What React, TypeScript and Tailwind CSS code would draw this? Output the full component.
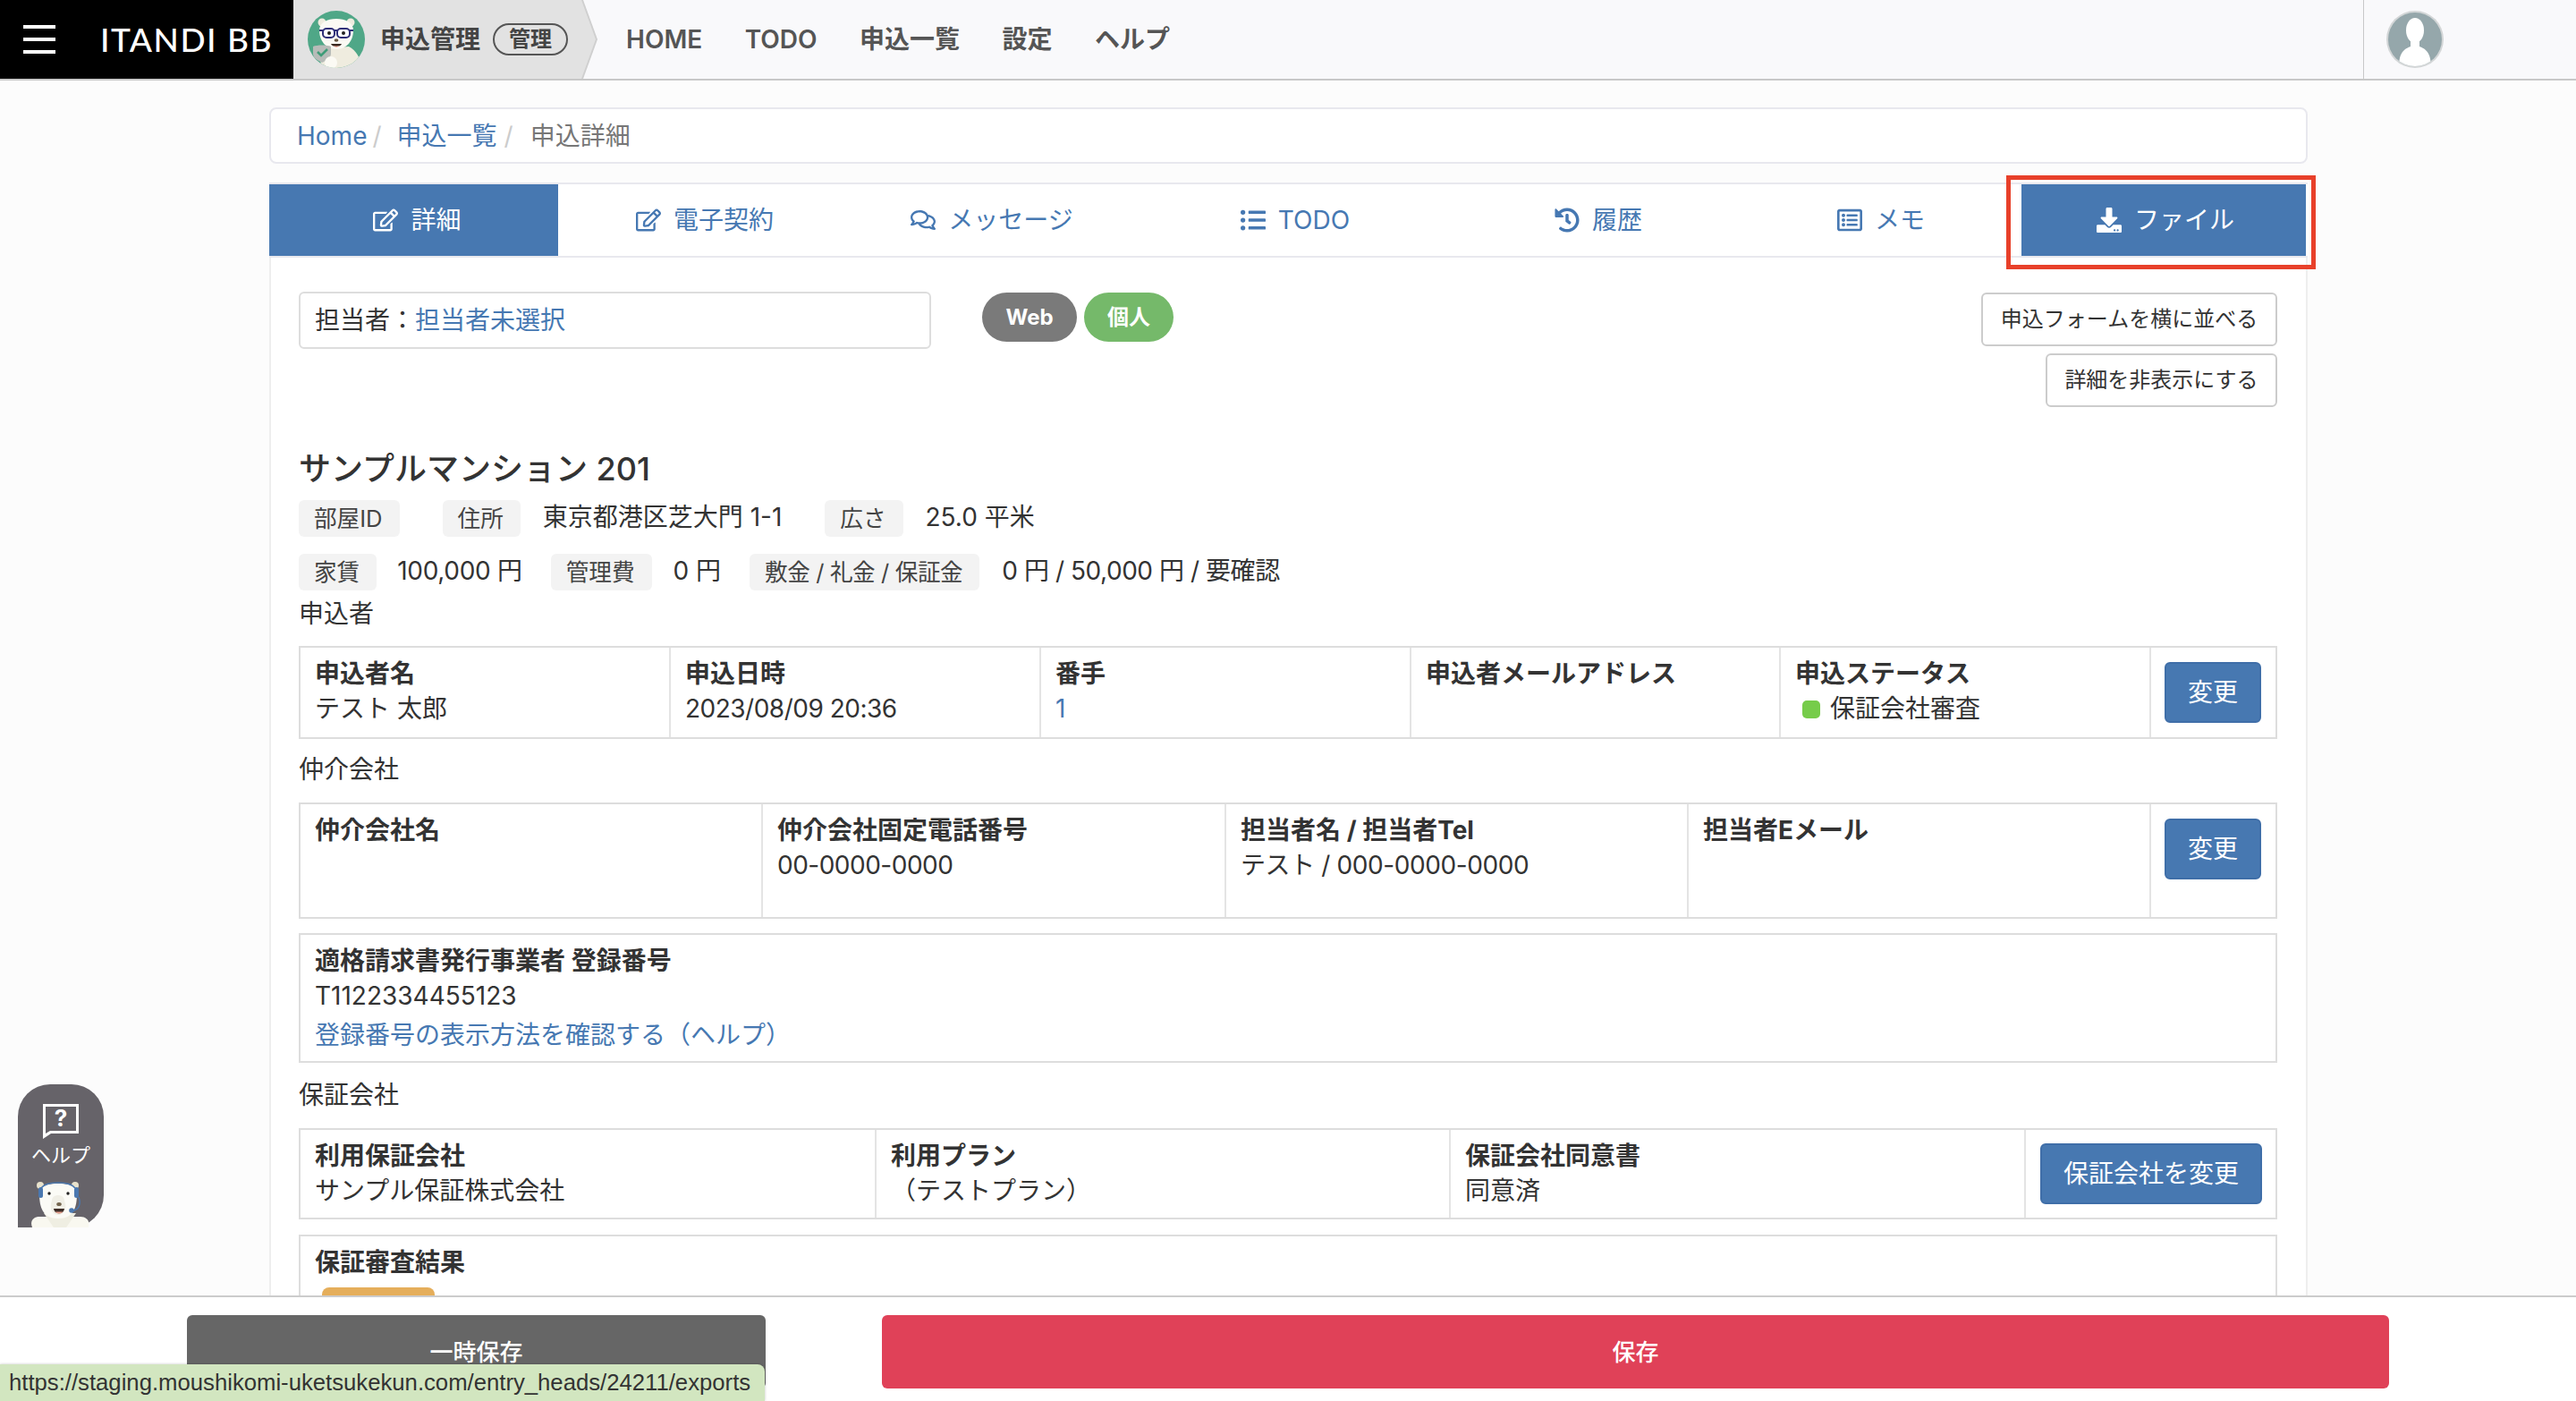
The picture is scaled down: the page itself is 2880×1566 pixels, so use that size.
import { FaDownload, FaHistory, FaListUl, FaRegComments, FaRegEdit, FaRegListAlt } from "react-icons/fa";

const navItems = ["HOME", "TODO", "申込一覧", "設定", "ヘルプ"];

const tabs = [
  { label: "詳細", icon: FaRegEdit, active: true, pad: "pl-[8px]" },
  { label: "電子契約", icon: FaRegEdit, pad: "pl-[2px]" },
  { label: "メッセージ", icon: FaRegComments, pad: "pl-[2px]" },
  { label: "TODO", icon: FaListUl, pad: "pl-[2px]" },
  { label: "履歴", icon: FaHistory, pad: "pl-[2px]" },
  { label: "メモ", icon: FaRegListAlt, pad: "pl-[2px]" },
  { label: "ファイル", icon: FaDownload, active: true, pad: "pl-[4px]" },
];

const Tag = ({ children, className = "" }: { children: React.ReactNode; className?: string }) => (
  <span className={`flex h-[41px] items-center rounded-md bg-[#f3f3f3] pr-[19px] pl-[17px] text-[25.6px] text-[#444] ${className}`}>{children}</span>
);

const Cell = ({ title, children, last }: { title: string; children?: React.ReactNode; last?: boolean }) => (
  <div className={`pl-[16px] pt-[10px] text-[28px] leading-[39px] ${last ? "" : "border-r-2 border-[#e4e4e4]"}`}>
    <div className="font-bold text-[#333]">{title}</div>
    <div className="text-[#333]">{children}</div>
  </div>
);

const ActionButton = ({ children, width }: { children: React.ReactNode; width: string }) => (
  <button className={`h-[68px] ${width} rounded-md border-2 border-[#3f6ea8] bg-[#4778b1] text-[28px] text-white`}>{children}</button>
);

const SectionLabel = ({ children, className }: { children: React.ReactNode; className: string }) => (
  <div className={`text-[28px] leading-[39px] text-[#333] ${className}`}>{children}</div>
);

const HeaderBear = () => (
  <svg viewBox="0 0 64 64" className="h-[64px] w-[64px] shrink-0">
    <defs>
      <clipPath id="bearClip">
        <circle cx="32" cy="32" r="32" />
      </clipPath>
    </defs>
    <g clipPath="url(#bearClip)">
      <rect width="64" height="64" fill="#4fa787" />
      <path d="M20 42 C14 50 14 64 14 64 H60 C60 54 54 44 46 40Z" fill="#efecdf" />
      <circle cx="16" cy="13" r="4.5" fill="#efecdf" />
      <circle cx="48" cy="13" r="4.5" fill="#efecdf" />
      <path d="M13 22 C13 13 22 9 32 9 C42 9 51 13 51 22 C51 33 44 43 32 43 C20 43 13 33 13 22Z" fill="#fbfaf4" />
      <rect x="17" y="20" width="13" height="10" rx="4" fill="#fff" stroke="#2f2f78" strokeWidth="2" />
      <rect x="33" y="20" width="14" height="10" rx="4" fill="#fff" stroke="#2f2f78" strokeWidth="2" />
      <path d="M13 22H17M30 22H33M47 22H51" stroke="#2f2f78" strokeWidth="2" />
      <circle cx="24" cy="25" r="2" fill="#222" />
      <circle cx="40" cy="25" r="2" fill="#222" />
      <ellipse cx="32" cy="33" rx="2.4" ry="1.8" fill="#6b5a45" />
      <path d="M26 37 H38 C37 41 27 41 26 37Z" fill="#3a2a22" />
      <path d="M29 39.5 H35 C34 41 30 41 29 39.5Z" fill="#ee9c8c" />
      <path d="M6 40 C10 38 22 38 26 40 V48 C26 53 20 56 16 58 C12 56 6 53 6 48Z" fill="#b7bbb8" />
      <path d="M11 46 L15 50 L22 43" fill="none" stroke="#3f9c78" strokeWidth="2.6" />
      <circle cx="26" cy="58" r="7" fill="#fbfaf4" />
    </g>
  </svg>
);

const UserAvatar = () => (
  <svg viewBox="0 0 64 64" className="h-[64px] w-[64px]">
    <defs>
      <clipPath id="userClip">
        <circle cx="32" cy="32" r="30" />
      </clipPath>
    </defs>
    <circle cx="32" cy="32" r="32" fill="#d3d6d7" />
    <g clipPath="url(#userClip)">
      <rect width="64" height="64" fill="#95a7ab" />
      <ellipse cx="32" cy="22" rx="10" ry="14" fill="#fff" />
      <path d="M27 33 H37 V40 C44 43 50 46 50 64 H14 C14 46 20 43 27 40Z" fill="#fff" />
    </g>
  </svg>
);

const HelpBear = () => (
  <svg viewBox="0 0 66 52" className="absolute bottom-0 left-[14px] h-[52px] w-[66px]">
    <path d="M2 52 C-1 44 4 40 10 40 L56 40 C62 40 67 44 65 52Z" fill="#f9f8f0" />
    <path d="M15 36 H51 L40 52 H26Z" fill="#efeee2" />
    <circle cx="11" cy="5" r="4" fill="#e8e2cc" />
    <circle cx="50" cy="5" r="4" fill="#e8e2cc" />
    <path d="M10 14 C10 5 20 3 31 3 C42 3 52 5 52 14 C52 30 48 42 31 42 C14 42 10 30 10 14Z" fill="#fbfbf6" />
    <path d="M24 22 C24 14 38 14 38 22 C42 32 36 38 31 38 C26 38 20 32 24 22Z" fill="#f0efe6" />
    <path d="M12 8 C18 0 44 0 50 8" fill="none" stroke="#4a78b0" strokeWidth="1.6" />
    <rect x="9" y="7" width="5" height="12" rx="2.5" fill="#4a78b0" />
    <rect x="49" y="7" width="5" height="12" rx="2.5" fill="#4a78b0" />
    <path d="M54 18 C57 26 54 32 48 33" fill="none" stroke="#4a78b0" strokeWidth="1.4" />
    <circle cx="46" cy="33" r="2.8" fill="#4a78b0" />
    <circle cx="21" cy="14" r="1.7" fill="#222" />
    <circle cx="42" cy="14" r="1.7" fill="#222" />
    <ellipse cx="32" cy="26" rx="2.8" ry="2" fill="#75664f" />
    <path d="M26 31 H38 C37 38 27 38 26 31Z" fill="#3b2b25" />
    <path d="M28 34.5 H36 C35 37 29 37 28 34.5Z" fill="#eda491" />
  </svg>
);

export default function App() {
  return (
    <div className="relative h-[1566px] w-[2880px] overflow-hidden bg-[#fcfcfc] font-['Inter','Noto_Sans_CJK_JP',sans-serif] text-[#333]">
      <header className="flex h-[90px] border-b-2 border-[#c8c8c8] bg-[#f9f9fb]">
        <div className="flex w-[328px] items-center bg-black pl-[26px]">
          <div className="flex h-[32px] w-[36px] flex-col justify-between">
            <span className="h-[4px] bg-white" />
            <span className="h-[4px] bg-white" />
            <span className="h-[4px] bg-white" />
          </div>
          <span className="ml-[50px] whitespace-nowrap font-['Lato',sans-serif] text-[37px] font-medium tracking-[1.5px] text-white">ITANDI BB</span>
        </div>
        <div className="w-[340px] bg-[#cfcfcf] [clip-path:polygon(0_0,324px_0,340px_50%,324px_100%,0_100%)]">
          <div className="flex h-full w-[338px] items-center bg-[#e2e2e2] pl-[16px] [clip-path:polygon(0_0,322px_0,338px_50%,322px_100%,0_100%)]">
            <HeaderBear />
            <span className="ml-[17px] text-[28px] font-bold whitespace-nowrap text-[#444]">申込管理</span>
            <span className="ml-[14px] flex h-[36px] w-[84px] items-center justify-center rounded-full border-2 border-[#555] text-[24px] font-bold text-[#444]">管理</span>
          </div>
        </div>
        <nav className="ml-[32px] flex items-center gap-[47.5px] text-[28px] font-semibold text-[#555]">
          {navItems.map((item) => (
            <span key={item} className="whitespace-nowrap">{item}</span>
          ))}
        </nav>
        <div className="ml-auto flex w-[238px] items-center border-l border-[#c8c8c8] pl-[25px]">
          <UserAvatar />
        </div>
      </header>

      <main className="ml-[301px] w-[2279px]">
        <div className="mt-[30px] flex h-[63px] items-center rounded-lg border-2 border-[#e8e8ee] bg-white pl-[29px] text-[28px]">
          <span className="text-[#4678b2]">Home</span>
          <span className="mr-[17px] ml-[6px] text-[#ccc]">/</span>
          <span className="text-[#4678b2]">申込一覧</span>
          <span className="mr-[19px] ml-[8px] text-[#ccc]">/</span>
          <span className="text-[#777]">申込詳細</span>
        </div>

        <div className="mt-[21px] grid h-[84px] grid-cols-[323px_326px_316px_362px_316px_316px_318px] border-y-2 border-[#e8e8ee] bg-white text-[28px]">
          {tabs.map(({ label, icon: Icon, active, pad }) => (
            <div key={label} className={`flex items-center justify-center gap-[14px] ${pad} ${active ? "bg-[#4778b1] text-white" : "text-[#4678b2]"}`}>
              <Icon className="text-[28px]" />
              <span>{label}</span>
            </div>
          ))}
        </div>

        <section className="h-[1300px] border-x-2 border-[#eeeeee] bg-white pr-[32px] pl-[31px]">
          <div className="flex items-start justify-between pt-[38px]">
            <div className="flex">
              <div className="flex h-[64px] w-[707px] items-center rounded-md border-2 border-[#ddd] pl-[16px] text-[28px]">
                担当者：<span className="text-[#4678b2]">担当者未選択</span>
              </div>
              <div className="ml-[57px] flex h-[55px] gap-[8px] pt-px text-[24px] font-bold text-white">
                <span className="flex h-[55px] w-[106px] items-center justify-center rounded-full bg-[#7a7a7a]">Web</span>
                <span className="flex h-[55px] w-[100px] items-center justify-center rounded-full bg-[#75b96a]">個人</span>
              </div>
            </div>
            <div className="flex flex-col items-end gap-[8px] pt-px text-[24px]">
              <button className="h-[60px] w-[331px] rounded-md border-2 border-[#ccc] bg-white">申込フォームを横に並べる</button>
              <button className="h-[60px] w-[259px] rounded-md border-2 border-[#ccc] bg-white">詳細を非表示にする</button>
            </div>
          </div>

          <h1 className="mt-[44px] text-[36px] leading-[50px] font-medium text-[#333]">サンプルマンション 201</h1>

          <div className="mt-[10px] flex h-[41px] items-center text-[28px] leading-[36px]">
            <Tag>部屋ID</Tag>
            <span className="ml-[48px]"><Tag>住所</Tag></span>
            <span className="ml-[25px] pb-[3px]">東京都港区芝大門 1-1</span>
            <span className="ml-[48px]"><Tag>広さ</Tag></span>
            <span className="ml-[25px] pb-[3px]">25.0 平米</span>
          </div>
          <div className="mt-[19px] flex h-[41px] items-center text-[28px] leading-[36px]">
            <Tag>家賃</Tag>
            <span className="ml-[23px] pb-[3px] tracking-[-0.3px]">100,000 円</span>
            <span className="ml-[32px]"><Tag>管理費</Tag></span>
            <span className="ml-[24px] pb-[3px]">0 円</span>
            <span className="ml-[32px]"><Tag className="tracking-[-0.4px]">敷金 / 礼金 / 保証金</Tag></span>
            <span className="ml-[25px] pb-[3px] tracking-[-0.45px]">0 円 / 50,000 円 / 要確認</span>
          </div>

          <SectionLabel className="mt-[7px]">申込者</SectionLabel>
          <div className="mt-[16px] grid h-[104px] grid-cols-[414px_414px_414px_413px_414px_1fr] border-2 border-[#ddd]">
            <Cell title="申込者名">テスト 太郎</Cell>
            <Cell title="申込日時"><span className="tracking-[-0.5px]">2023/08/09 20:36</span></Cell>
            <Cell title="番手"><span className="text-[#4678b2]">1</span></Cell>
            <Cell title="申込者メールアドレス" />
            <Cell title="申込ステータス">
              <span className="ml-[8px] inline-flex items-center gap-[11px]">
                <span className="h-[20px] w-[20px] rounded-[5px] bg-[#76cc4a]" />
                保証会社審査
              </span>
            </Cell>
            <div className="pt-[16px] pl-[15px]"><ActionButton width="w-[108px]">変更</ActionButton></div>
          </div>

          <SectionLabel className="mt-[15px]">仲介会社</SectionLabel>
          <div className="mt-[17px] grid h-[130px] grid-cols-[517px_518px_517px_517px_1fr] border-2 border-[#ddd]">
            <Cell title="仲介会社名" />
            <Cell title="仲介会社固定電話番号"><span className="tracking-[-0.5px]">00-0000-0000</span></Cell>
            <Cell title="担当者名 / 担当者Tel"><span className="tracking-[-0.4px]">テスト / 000-0000-0000</span></Cell>
            <Cell title="担当者Eメール" />
            <div className="pt-[16px] pl-[15px]"><ActionButton width="w-[108px]">変更</ActionButton></div>
          </div>

          <div className="mt-[16px] h-[145px] border-2 border-[#ddd] pt-[10px] pl-[16px] text-[28px] leading-[39px]">
            <div className="font-bold">適格請求書発行事業者 登録番号</div>
            <div>T1122334455123</div>
            <div className="mt-[5px] text-[#4678b2]">登録番号の表示方法を確認する（ヘルプ）</div>
          </div>

          <SectionLabel className="mt-[17px]">保証会社</SectionLabel>
          <div className="mt-[17px] grid h-[102px] grid-cols-[644px_642px_643px_1fr] border-2 border-[#ddd]">
            <Cell title="利用保証会社">サンプル保証株式会社</Cell>
            <Cell title="利用プラン">（テストプラン）</Cell>
            <Cell title="保証会社同意書">同意済</Cell>
            <div className="pt-[15px] pl-[16px]"><ActionButton width="w-[248px]">保証会社を変更</ActionButton></div>
          </div>

          <div className="mt-[17px] h-[200px] border-2 border-[#ddd] pt-[10px] pl-[16px] text-[28px] leading-[39px]">
            <div className="font-bold">保証審査結果</div>
            <div className="mt-[8px] ml-[8px] h-[40px] w-[126px] rounded-lg bg-[#e5ae5b]" />
          </div>
        </section>
      </main>

      {/* 赤枠の注釈 */}
      <div className="absolute top-[196px] left-[2243px] h-[105px] w-[346px] border-[5px] border-[#e8402a]" />

      <div className="absolute top-[1212px] left-[20px] h-[160px] w-[96px] rounded-t-[36px] rounded-br-[36px] bg-[#666369] text-white">
        <svg viewBox="0 0 40 39" className="absolute top-[22px] left-[28px] h-[39px] w-[40px]">
          <path fillRule="evenodd" d="M0 0H40V33H9L0 39ZM3 3V33L8 30H37V3Z" fill="#fff" />
          <text x="20" y="25" textAnchor="middle" fontSize="26" fontWeight="700" fill="#fff" fontFamily="Inter">?</text>
        </svg>
        <div className="absolute top-[64px] w-full text-center text-[22px] leading-[30px]">ヘルプ</div>
        <HelpBear />
      </div>

      <footer className="absolute inset-x-0 bottom-0 flex h-[118px] border-t-2 border-[#ccc] bg-white pt-[20px] pl-[209px] text-[26px] font-medium text-white">
        <div className="flex h-[82px] w-[647px] items-center justify-center rounded-md bg-[#666]">一時保存</div>
        <div className="ml-[130px] flex h-[82px] w-[1685px] items-center justify-center rounded-md bg-[#e04158]">保存</div>
      </footer>

      <div className="absolute bottom-0 left-0 flex h-[41px] w-[855px] items-center rounded-tr-lg bg-[#d2e6c0] pl-[10px] font-['Liberation_Sans',sans-serif] text-[25.7px] whitespace-nowrap text-[#333] shadow-[0_0_3px_rgba(0,0,0,0.25)]">
        https://staging.moushikomi-uketsukekun.com/entry_heads/24211/exports
      </div>
    </div>
  );
}
